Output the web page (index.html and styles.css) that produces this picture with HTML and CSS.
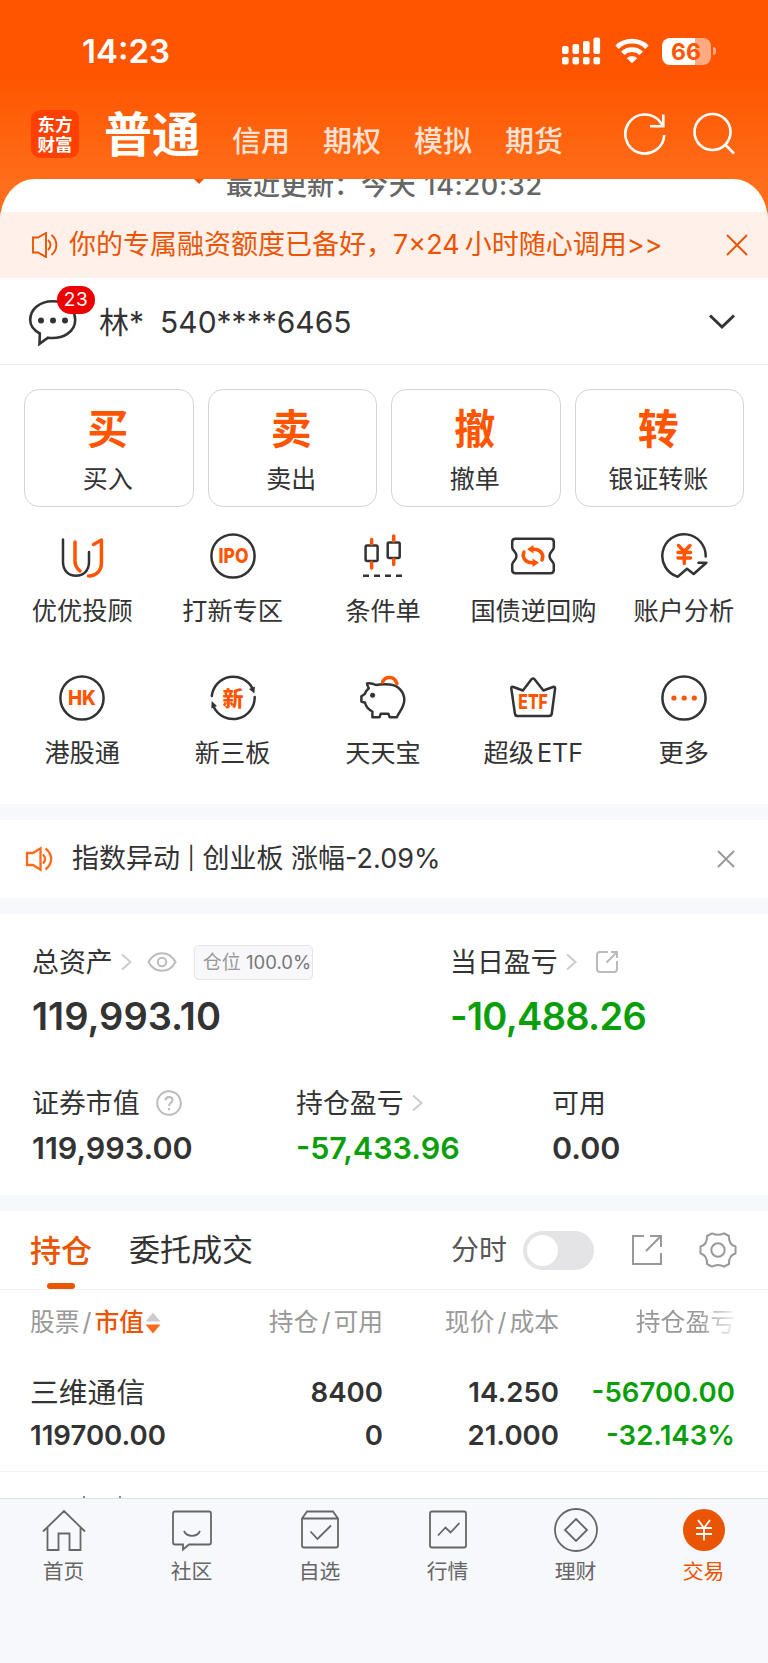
FILE: index.html
```html
<!DOCTYPE html>
<html lang="zh-CN">
<head>
    <meta charset="UTF-8">
    <meta name="viewport" content="width=device-width, initial-scale=1.0">
    <title>交易</title>
    <link rel="stylesheet" href="styles.css">
</head>
<body>
    <header class="header">
        <div class="status-bar">
            <span class="clock">14:23</span>
            <svg class="signal" width="39" height="28" viewBox="0 0 39 28" fill="#fff">
                <rect x="0" y="9" width="6.6" height="8" rx="2"/>
                <rect x="10.5" y="7" width="6.6" height="10" rx="2"/>
                <rect x="21" y="4" width="6.6" height="13" rx="2"/>
                <rect x="31.5" y="0.5" width="6.6" height="16.5" rx="2"/>
                <rect x="0" y="20" width="6.6" height="7.4" rx="2"/>
                <rect x="10.5" y="20" width="6.6" height="7.4" rx="2"/>
                <rect x="21" y="20" width="6.6" height="7.4" rx="2"/>
                <rect x="31.5" y="20" width="6.6" height="7.4" rx="2"/>
            </svg>
            <svg class="wifi" width="34" height="26" viewBox="0 0 34 26" fill="none" stroke="#fff" stroke-width="4.8">
                <path d="M2 9.2C10.3 1.2 23.7 1.2 32 9.2"/>
                <path d="M7.7 15.3C12.8 10.4 21.2 10.4 26.3 15.3"/>
                <path d="M17 25.3L11.9 20.2C14.5 17.6 19.5 17.6 22.1 20.2Z" fill="#fff" stroke="none"/>
            </svg>
            <div class="battery">66</div>
            <div class="battery-tip"></div>
        </div>
        <nav class="top-nav">
            <div class="logo"><span>东方</span><span>财富</span></div>
            <a class="current">普通</a>
            <a>信用</a>
            <a>期权</a>
            <a>模拟</a>
            <a>期货</a>
            <svg class="refresh" width="44" height="44" viewBox="0 0 44 44" fill="none" stroke="#fff" stroke-width="2.6">
                <path d="M41.3 23A19.5 19.5 0 1 1 37 9.8L40.3 13.7"/>
                <path d="M40.3 2.5V14.3H27"/>
            </svg>
            <svg class="search" width="44" height="44" viewBox="0 0 44 44" fill="none" stroke="#fff" stroke-width="2.6">
                <circle cx="20.5" cy="20" r="18"/>
                <path d="M33 32.5L42 41.5"/>
            </svg>
        </nav>
    </header>

    <main class="sheet">
        <div class="updated"><p>最近更新：<span>今天 14:20:32</span></p></div>

        <div class="promo">
            <svg width="26" height="26" viewBox="0 0 26 26" fill="none" stroke="#ea5504" stroke-width="1.9">
                <path d="M1 5.5H6L14 1V25L6 20.5H1Z"/>
                <path d="M16 8C19.3 11 19.3 15 16 18M19.5 3C26 8.5 26 17.5 19.5 23"/>
            </svg>
            <span class="promo-text">你的专属融资额度已备好，7×24<i></i>小时随心调用&gt;&gt;</span>
            <svg class="close" width="22" height="22" viewBox="0 0 22 22" stroke="#ea5504" stroke-width="1.9"><path d="M1 1L21 21M21 1L1 21"/></svg>
        </div>

        <div class="account">
            <div class="message">
                <svg width="50" height="50" viewBox="0 0 50 50" fill="none" stroke="#333" stroke-width="2.6">
                    <path d="M11.8 36.5C5.5 33 2.2 28.5 2.2 23C2.2 12 12 4.2 24.5 4.2C37.5 4.2 47.2 12 47.2 23C47.2 34.5 35.5 42.5 20 40.7L11.5 46.8Z"/>
                    <g fill="#333" stroke="none"><circle cx="13" cy="23.5" r="3"/><circle cx="25" cy="23.5" r="3"/><circle cx="37" cy="23.5" r="3"/></g>
                </svg>
                <span class="badge">23</span>
            </div>
            <span class="account-name">林*</span>
            <span class="account-no">540****6465</span>
            <svg class="arrow-down" width="28" height="18" viewBox="0 0 28 18" fill="none" stroke="#333" stroke-width="3"><path d="M2 2.5L14 14L26 2.5"/></svg>
        </div>

        <div class="actions">
            <div class="action"><b>买</b><span>买入</span></div>
            <div class="action"><b>卖</b><span>卖出</span></div>
            <div class="action"><b>撤</b><span>撤单</span></div>
            <div class="action"><b>转</b><span>银证转账</span></div>
        </div>

        <div class="services">
            <div class="service">
                <svg viewBox="0 0 50 48">
                    <path d="M6 7.5V30C6 38.5 11.500 43.800 19 43.800S32 38.500 32 30V20"/>
                    <path class="hot" d="M18 10V29C18 33 20 36.500 23 39M31.500 44C39.500 44 44.400 38.500 44.400 31V8L36.500 12.500"/>
                </svg>
                <span>优优投顾</span>
            </div>
            <div class="service">
                <svg viewBox="0 0 48 48">
                    <circle cx="24" cy="24" r="21.6"/>
                    <text x="9.5" y="31.3" textLength="30" lengthAdjust="spacingAndGlyphs">IPO</text>
                </svg>
                <span>打新专区</span>
            </div>
            <div class="service">
                <svg viewBox="0 0 50 48">
                    <rect x="7.6" y="13.6" width="12" height="15.5" rx="1.5"/>
                    <rect x="29.7" y="10.6" width="12" height="15.5" rx="1.5"/>
                    <path class="hot" d="M13.600 7.500V12M13.600 30.600V36M35.700 4V9M35.700 27.600V32.500"/>
                    <path d="M5 43.800H44.500" stroke-dasharray="6 5" stroke-linecap="butt"/>
                </svg>
                <span>条件单</span>
            </div>
            <div class="service">
                <svg viewBox="0 0 50 48">
                    <path d="M7.500 6.800H42.500Q45.800 6.800 45.800 10V15.500C45.800 18.500 41.500 19.500 41.500 24S45.800 29.500 45.800 32.500V38Q45.800 41.200 42.500 41.200H7.500Q4.200 41.200 4.200 38V32.500C4.200 29.500 8.500 28.500 8.500 24S4.200 18.500 4.200 15.500V10Q4.200 6.800 7.500 6.800Z"/>
                    <path class="hot" d="M23 17.300H26C32.500 17.300 36.500 22.500 34 28M27 30.700H24C17.500 30.700 13.500 25.500 16 20"/>
                    <path class="fill" d="M19 17.300L25.500 13V21.600ZM31 30.700L24.500 26.400V35Z"/>
                </svg>
                <span>国债逆回购</span>
            </div>
            <div class="service">
                <svg viewBox="0 0 48 48">
                    <path d="M45.700 24.500A21.700 21.700 0 1 0 17.700 44.700L27 36.800L33.700 42L46.300 30.700H38.500"/>
                    <path class="hot" d="M18.500 13.500L24.300 19.500L30 13.500M24.300 19.500V31.500M18 20.500H30.600M18 25.900H30.600"/>
                </svg>
                <span>账户分析</span>
            </div>
            <div class="service">
                <svg viewBox="0 0 48 48">
                    <circle cx="24" cy="24" r="21.6"/>
                    <text x="10" y="31.3" textLength="28" lengthAdjust="spacingAndGlyphs">HK</text>
                </svg>
                <span>港股通</span>
            </div>
            <div class="service">
                <svg viewBox="0 0 48 48">
                    <path d="M2.800 22A21.600 21.600 0 0 1 43.500 14.500M45.700 23A21.600 21.600 0 0 1 4.500 32.500"/>
                    <path class="dark" d="M45.300 19.500L40 15L46 12.500ZM2.700 27L8 32L2.300 34.500Z"/>
                    <text class="cn" x="13.5" y="31.5">新</text>
                </svg>
                <span>新三板</span>
            </div>
            <div class="service">
                <svg viewBox="0 0 50 48">
                    <path d="M9 9.500C11.500 9 15 9.500 18 11C23 10 28 10.200 32 10.500C41 11.500 46.300 18.500 46.300 26C46.300 33 41.500 37.500 38.800 43.200H31.800L30.300 39.800H22.800L21.500 43.200H14.400V37.500C10.500 35.500 8 32.500 7 28.700L3.400 27.500V22.200L6.800 20C7.800 17.500 9 15.800 10.800 14.300Q9.500 12 9 9.500Z"/>
                    <circle class="dark" cx="14.6" cy="21.3" r="2.5"/>
                    <path class="hot" d="M24.600 8C27 2 36.500 1.500 38.800 9.500"/>
                </svg>
                <span>天天宝</span>
            </div>
            <div class="service">
                <svg viewBox="0 0 50 48">
                    <path d="M3.300 14.500Q3.200 12 5.500 13L14.900 16.500L23.500 5.300Q25 3.500 26.500 5.300L35.400 16.500L45 13Q47.300 12.300 47.100 14.500L43.800 39.500Q43.500 42 41 42H9.700Q7.200 42 6.900 39.500Z"/>
                    <text x="10.3" y="35.2" textLength="29.5" lengthAdjust="spacingAndGlyphs">ETF</text>
                </svg>
                <span>超级<i></i>ETF</span>
            </div>
            <div class="service">
                <svg viewBox="0 0 48 48">
                    <circle cx="24" cy="24" r="21.6"/>
                    <circle class="fill" cx="13.9" cy="24" r="2.6"/>
                    <circle class="fill" cx="24.2" cy="24" r="2.6"/>
                    <circle class="fill" cx="34.3" cy="24" r="2.6"/>
                </svg>
                <span>更多</span>
            </div>
        </div>

        <div class="alert">
            <svg width="28" height="26" viewBox="0 0 28 26" fill="none" stroke="#ff6a1a" stroke-width="2.3">
                <path d="M2 7H8L15.500 2.300V23.700L8 19H2Z"/>
                <path d="M18 8.500C20.800 11.500 20.800 14.500 18 17.500M20.500 2.500C28 8.500 28 17.500 20.500 23.500"/>
            </svg>
            <span class="alert-text">指数异动 <small>|</small> 创业板 涨幅-2.09%</span>
            <svg class="close" width="18" height="18" viewBox="0 0 18 18" stroke="#999" stroke-width="1.9"><path d="M1 1L17 17M17 1L1 17"/></svg>
        </div>

        <section class="assets">
            <div class="asset total">
                <div class="label"><span>总资产</span>
                    <svg class="more" width="11" height="18" viewBox="0 0 11 18"><path d="M1 1.500L9.500 9L1 16.500"/></svg>
                    <svg class="eye" width="30" height="22" viewBox="0 0 30 22"><path d="M1.500 11C8 -0.800 22 -0.800 28.500 11C22 22.800 8 22.800 1.500 11Z"/><circle cx="15" cy="11" r="4.2"/></svg>
                    <span class="position">仓位 <em>100.0%</em></span>
                </div>
                <div class="value">119,993.10</div>
            </div>
            <div class="asset today">
                <div class="label"><span>当日盈亏</span>
                    <svg class="more" width="11" height="18" viewBox="0 0 11 18"><path d="M1 1.500L9.500 9L1 16.500"/></svg>
                    <svg class="share" width="24" height="24" viewBox="0 0 24 24"><path d="M13 2H5Q2 2 2 5V19Q2 22 5 22H19Q22 22 22 19V11M11.500 12.500L22 2M16 2H22V8"/></svg>
                </div>
                <div class="value down">-10,488.26</div>
            </div>
        </section>
        <section class="assets details">
            <div class="asset">
                <div class="label"><span>证券市值</span>
                    <svg class="help" width="26" height="26" viewBox="0 0 26 26"><circle cx="13" cy="13" r="11.8"/><path d="M9.600 10.300C9.600 5.800 16.500 5.800 16.500 10C16.500 12.800 13 12.800 13 16"/><path d="M13 18V20.300"/></svg>
                </div>
                <div class="value">119,993.00</div>
            </div>
            <div class="asset">
                <div class="label"><span>持仓盈亏</span>
                    <svg class="more" width="11" height="18" viewBox="0 0 11 18"><path d="M1 1.500L9.500 9L1 16.500"/></svg>
                </div>
                <div class="value down">-57,433.96</div>
            </div>
            <div class="asset">
                <div class="label"><span>可用</span></div>
                <div class="value">0.00</div>
            </div>
        </section>

        <div class="tabs">
            <a class="tab active">持仓</a>
            <a class="tab">委托成交</a>
            <span class="switch-label">分时</span>
            <span class="switch"></span>
            <svg class="open" width="32" height="32" viewBox="0 0 32 32" fill="none" stroke="#999" stroke-width="2"><path d="M13 2H2V30H30V19M15 17L30 2M19 2H30V13"/></svg>
            <svg class="gear" width="38" height="38" viewBox="0 0 38 38" fill="none" stroke="#999" stroke-width="2">
                <path d="M13 2.300Q19 5.300 25 2.300L30 5Q29.500 13.500 36.500 15.500V22.500Q29.500 24.500 30 33L25 35.700Q19 32.300 13 35.700L8 33Q8.500 24.500 1.500 22.500V15.500Q8.500 13.500 8 5Z" stroke-linejoin="round"/>
                <circle cx="19" cy="19" r="6.7"/>
            </svg>
        </div>

        <div class="holdings">
            <div class="row head">
                <span>股票<i>/</i><strong>市值</strong><svg width="16" height="22" viewBox="0 0 16 22"><path d="M8 0.500L15.500 9.500H0.500Z" fill="#ccc"/><path d="M8 21.500L15.500 12.500H0.500Z" fill="#ff6a1a"/></svg></span>
                <span>持仓<i>/</i>可用</span>
                <span>现价<i>/</i>成本</span>
                <span class="fade">持仓盈亏</span>
            </div>
            <div class="row">
                <span class="name">三维通信</span>
                <span>8400</span>
                <span>14.250</span>
                <span class="down">-56700.00</span>
            </div>
            <div class="row">
                <span>119700.00</span>
                <span>0</span>
                <span>21.000</span>
                <span class="down">-32.143%</span>
            </div>
        </div>
        <div class="next-row"></div>
    </main>

    <footer class="tabbar">
        <a>
            <svg viewBox="0 0 44 44"><path d="M1 23.500L22 3L43 23.500M5.500 19.500V42H16.500V25.500H27.500V42H38.500V19.500"/></svg>
            <span>首页</span>
        </a>
        <a>
            <svg viewBox="0 0 44 44"><path d="M5 3.500H39Q41 3.500 41 5.500V34.500Q41 36.500 39 36.500H19L13 41.500V36.500H5Q3 36.500 3 34.500V5.500Q3 3.500 5 3.500ZM14 23C17 29.500 27 29.500 30 23"/></svg>
            <span>社区</span>
        </a>
        <a>
            <svg viewBox="0 0 44 44"><path d="M4 10.500L9 3.500H35L40 10.500V37.500Q40 39.500 38 39.500H6Q4 39.500 4 37.500ZM4 10.500H40M12.500 23.500L19.500 31L33 17.500"/></svg>
            <span>自选</span>
        </a>
        <a>
            <svg viewBox="0 0 44 44"><path d="M6 3.500H38Q40 3.500 40 5.500V37.500Q40 39.500 38 39.500H6Q4 39.500 4 37.500V5.500Q4 3.500 6 3.500ZM12 27.500L19.500 19.500L24.500 24.500L33.500 15"/></svg>
            <span>行情</span>
        </a>
        <a>
            <svg viewBox="0 0 44 44"><circle cx="22" cy="22" r="21"/><path d="M22 11L33 22L22 33L11 22Z"/></svg>
            <span>理财</span>
        </a>
        <a class="active">
            <svg viewBox="0 0 44 44"><circle cx="22" cy="22" r="21"/><path d="M16 12L22 20L28 12M22 20V32.500M14 20H30M14 26H30"/></svg>
            <span>交易</span>
        </a>
    </footer>
</body>
</html>
```
FILE: styles.css
```css
* {
    box-sizing: border-box;
}

body {
    display: flex;
    flex-direction: column;
    width: 768px;
    height: 1663px;
    margin: 0;
    overflow: hidden;
    font-family: Inter, "Noto Sans CJK SC", sans-serif;
    color: #333;
    background: linear-gradient(#ff5500 75px, #ff6e1a 185px, #ff6a1a 240px);
}

svg {
    flex: none;
    display: block;
}

i, em {
    font-style: normal;
}

/* header */
.header {
    height: 179px;
    color: #fff;
}

.status-bar {
    display: flex;
    align-items: center;
    height: 102px;
    padding: 0 52px 0 82px;
}

.clock {
    margin-right: auto;
    font-size: 33px;
    font-weight: 600;
    line-height: 40px;
}

.signal {
    margin-right: 14px;
}

.wifi {
    margin-right: 13px;
}

.battery {
    width: 49px;
    height: 27px;
    padding-right: 1px;
    border-radius: 8px;
    background: linear-gradient(90deg, #fff 33px, #ffaa80 33px);
    color: #ff5500;
    font-size: 23px;
    font-weight: 700;
    line-height: 28px;
    text-align: center;
}

.battery-tip {
    width: 3px;
    height: 8px;
    margin-left: 2px;
    border-radius: 0 3px 3px 0;
    background: #ffaa80;
}

.top-nav {
    display: flex;
    align-items: center;
    height: 64px;
    padding-left: 31px;
    font-size: 29px;
    line-height: 40px;
}

.logo {
    display: flex;
    flex-direction: column;
    justify-content: center;
    width: 48px;
    height: 48px;
    margin-right: 25px;
    border-radius: 9px;
    background: #ff4000;
    font-family: "Noto Sans CJK SC", sans-serif;
    font-size: 17.5px;
    font-weight: 700;
    line-height: 20px;
    text-align: center;
}

.top-nav a {
    width: 60px;
    margin: 16px 31px 0 0;
    color: #ffe2d4;
    font-weight: 500;
    white-space: nowrap;
}

.top-nav .current {
    width: 98px;
    margin: 1px 30px 0 0;
    color: #fff;
    font-size: 48px;
    font-weight: 700;
}

.refresh {
    margin-left: 27px;
}

.search {
    margin-left: 25px;
}

/* white sheet */
.sheet {
    flex: 1;
    overflow: hidden;
    border-radius: 34px 34px 0 0 / 42px 42px 0 0;
    background: #fff;
}

.updated {
    height: 33px;
    overflow: hidden;
    padding-left: 226px;
    font-size: 27px;
    font-weight: 500;
    line-height: 13px;
    color: #666;
}

/* pointer under the current account type */
.updated::before {
    content: "";
    float: left;
    margin-left: -32px;
    border: 5px solid transparent;
    border-top-color: #ea5504;
    border-bottom: 0;
}

.updated p {
    margin: 0;
}

.updated span {
    letter-spacing: 0.7px;
}

.promo {
    display: flex;
    align-items: center;
    height: 66px;
    padding: 0 20px 0 32px;
    background: #fff0e9;
    color: #ea5504;
    font-size: 27px;
    line-height: 40px;
}

.promo-text {
    margin: -1px 0 0 11px;
}

.promo-text i {
    margin-right: 5px;
}

.close {
    margin-left: auto;
}

.account {
    display: flex;
    align-items: center;
    height: 87px;
    padding: 2px 32px 0 28px;
    border-bottom: 1px solid #ececec;
    font-size: 30px;
    line-height: 40px;
}

.message {
    position: relative;
    width: 71px;
}

.badge {
    position: absolute;
    left: 29px;
    top: -11px;
    width: 38px;
    height: 28px;
    border-radius: 14px;
    background: #ec0000;
    color: #fff;
    font-size: 19px;
    line-height: 28px;
    letter-spacing: 0.5px;
    text-align: center;
}

.account-no {
    margin-left: 16px;
}

.arrow-down {
    margin-left: auto;
}

.actions {
    display: grid;
    grid-template-columns: repeat(4, 1fr);
    gap: 14px;
    padding: 24px 24px 0;
}

.action {
    display: flex;
    flex-direction: column;
    align-items: center;
    height: 118px;
    padding: 19px 2px 0 0;
    border: 1px solid #d4d4d4;
    border-radius: 15px;
    font-size: 25px;
    line-height: 32px;
}

.action b {
    margin-bottom: 14px;
    color: #ff5500;
    font-size: 41px;
    line-height: 40px;
}

.services {
    display: grid;
    grid-template-columns: repeat(5, 1fr);
    grid-auto-rows: 142px;
    height: 297px;
    padding: 25px 9px 0 7px;
}

.service {
    display: flex;
    flex-direction: column;
    align-items: center;
    font-size: 25.2px;
    line-height: 32px;
    white-space: nowrap;
}

.service svg {
    height: 48px;
    margin-bottom: 15px;
    fill: none;
    stroke: #333;
    stroke-width: 2.5;
    stroke-linecap: round;
    stroke-linejoin: round;
}

.service i {
    margin-right: 3px;
}

.service .hot {
    stroke: #ff5500;
    stroke-width: 3.5;
}

.service .fill {
    fill: #ff5500;
    stroke: none;
}

.service .dark {
    fill: #333;
    stroke: none;
}

.service text {
    fill: #ff5500;
    stroke: none;
    font-size: 20.5px;
    font-weight: 800;
}

.service .cn {
    font-size: 21px;
}

.alert {
    display: flex;
    align-items: center;
    height: 110px;
    padding: 0 33px 0 25px;
    border: solid #f6f8fb;
    border-width: 16px 0;
    font-size: 27px;
    line-height: 40px;
}

.alert-text {
    margin: -1px 0 0 19px;
}

.alert-text small {
    font-size: 22px;
    vertical-align: 2px;
    line-height: 20px;
}

/* assets */
.assets {
    display: flex;
    padding: 28px 32px 0;
}

.asset {
    flex: none;
}

.label {
    display: flex;
    align-items: center;
    height: 40px;
    font-size: 26.9px;
    line-height: 40px;
    white-space: nowrap;
}

.label svg {
    fill: none;
    stroke: #bbb;
    stroke-width: 2;
}

.label .more {
    margin-left: 8px;
    stroke: #ccc;
}

.total {
    width: 418px;
}

.eye {
    margin-left: 15px;
}

.share {
    margin-left: 18px;
}

.help {
    margin-left: 16px;
}

.position {
    width: 119px;
    height: 35px;
    margin-left: 17px;
    padding-left: 8px;
    border: 1px solid #e4e4e6;
    border-radius: 5px;
    background: #f8f8fa;
    color: #999;
    font-size: 19px;
    line-height: 33px;
}

.position em {
    color: #777;
    font-size: 18.5px;
}

.value {
    margin-top: 10px;
    font-size: 38px;
    font-weight: 600;
    line-height: 48px;
}

.down {
    color: #0a9f0a;
}

.today .value {
    letter-spacing: -0.7px;
}

.details {
    height: 155px;
    padding-top: 43px;
}

.details .asset:first-child {
    width: 264px;
}

.details .asset:nth-child(2) {
    width: 256px;
}

.details .value {
    margin-top: 5px;
    font-size: 30.5px;
    line-height: 40px;
}

/* holdings */
.tabs {
    display: flex;
    align-items: center;
    height: 95px;
    padding: 0 31px 0 30px;
    border-top: 16px solid #f6f8fb;
    border-bottom: 1px solid #f2f2f2;
    font-size: 31px;
    line-height: 40px;
}

.tab {
    margin-right: 37px;
}

.tab.active {
    display: flex;
    flex-direction: column;
    align-items: center;
    align-self: flex-end;
    color: #ea5504;
    font-weight: 500;
}

.tab.active::after {
    content: "";
    width: 28px;
    height: 6px;
    margin-top: 12px;
    border-radius: 3px;
    background: #ea5504;
}

.switch-label {
    margin-left: auto;
    color: #555;
    font-size: 28px;
}

.switch {
    width: 71px;
    height: 39px;
    margin: 0 37px 0 16px;
    padding: 4px;
    border-radius: 20px;
    background: #e4e4e6;
}

.switch::before {
    content: "";
    display: block;
    width: 31px;
    height: 31px;
    border-radius: 50%;
    background: #fff;
}

.gear {
    margin-left: 36px;
}

.holdings {
    height: 182px;
    padding-top: 11px;
    border-bottom: 1px solid #f2f2f2;
}

.row {
    display: grid;
    grid-template-columns: 177px 176px 176px 176px;
    height: 43px;
    padding-left: 30px;
    font-size: 27.6px;
    font-weight: 600;
    line-height: 43px;
    text-align: right;
    white-space: nowrap;
}

.row span:first-child {
    text-align: left;
}

.row .name {
    font-size: 28.8px;
    font-weight: 400;
}

.row.head {
    margin-bottom: 27px;
    color: #999;
    font-size: 24.8px;
    font-weight: 400;
}

.head i {
    margin: 0 3px;
}

.head strong {
    color: #ea5504;
    font-weight: 500;
}

.head svg {
    display: inline-block;
    margin-left: 1px;
    vertical-align: -3px;
}

.fade {
    -webkit-mask-image: linear-gradient(90deg, #000 140px, transparent 182px);
    mask-image: linear-gradient(90deg, #000 140px, transparent 182px);
}

/* tops of the next stock name, the rest is under the tab bar */
.next-row {
    width: 2px;
    height: 2px;
    margin: 24px 0 0 83px;
    background: #888;
    box-shadow: 36px 0 #888;
}

/* bottom tabs */
.tabbar {
    display: grid;
    grid-template-columns: repeat(6, 128px);
    height: 165px;
    margin-left: 0;
    padding-top: 9px;
    border-top: 1px solid #dfe0e4;
    background: #f7f8fb;
}

.tabbar a {
    display: flex;
    flex-direction: column;
    align-items: center;
    padding-right: 1px;
    color: #666;
    font-size: 20.8px;
    line-height: 30px;
}

.tabbar svg {
    width: 44px;
    height: 44px;
    margin-bottom: 5px;
    fill: none;
    stroke: #666;
    stroke-width: 1.8;
}

.tabbar .active {
    color: #ea5504;
}

.tabbar .active svg {
    stroke: #fff;
}

.tabbar .active circle {
    fill: #ea5504;
    stroke: none;
}
```
